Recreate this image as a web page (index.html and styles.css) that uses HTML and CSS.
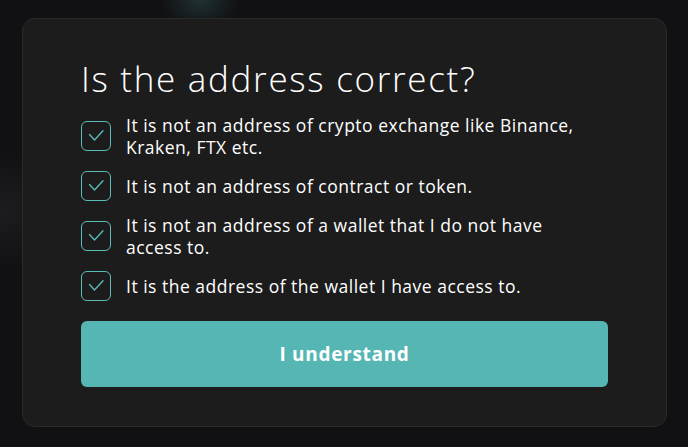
FILE: index.html
```html
<!DOCTYPE html>
<html lang="en">
<head>
<meta charset="utf-8">
<title>Is the address correct?</title>
<link rel="stylesheet" href="styles.css">
</head>
<body>
<div class="backdrop">
  <div class="modal">
    <h1 class="title">Is the address correct?</h1>
    <ul class="checks">
      <li class="check">
        <span class="box"><svg viewBox="0 0 18 18" width="18" height="18"><path d="M2.5 7.5 L7.5 13 L16 3.8" fill="none" stroke="#5bbdb9" stroke-width="1.3" stroke-linecap="round" stroke-linejoin="round"/></svg></span>
        <span class="label">It is not an address of crypto exchange like Binance, Kraken, FTX etc.</span>
      </li>
      <li class="check">
        <span class="box"><svg viewBox="0 0 18 18" width="18" height="18"><path d="M2.5 7.5 L7.5 13 L16 3.8" fill="none" stroke="#5bbdb9" stroke-width="1.3" stroke-linecap="round" stroke-linejoin="round"/></svg></span>
        <span class="label">It is not an address of contract or token.</span>
      </li>
      <li class="check">
        <span class="box"><svg viewBox="0 0 18 18" width="18" height="18"><path d="M2.5 7.5 L7.5 13 L16 3.8" fill="none" stroke="#5bbdb9" stroke-width="1.3" stroke-linecap="round" stroke-linejoin="round"/></svg></span>
        <span class="label">It is not an address of a wallet that I do not have access to.</span>
      </li>
      <li class="check">
        <span class="box"><svg viewBox="0 0 18 18" width="18" height="18"><path d="M2.5 7.5 L7.5 13 L16 3.8" fill="none" stroke="#5bbdb9" stroke-width="1.3" stroke-linecap="round" stroke-linejoin="round"/></svg></span>
        <span class="label">It is the address of the wallet I have access to.</span>
      </li>
    </ul>
    <button class="confirm" type="button">I understand</button>
  </div>
</div>
</body>
</html>
```

FILE: styles.css
```css
* { box-sizing: border-box; }
html, body { margin: 0; height: 100%; }
body {
  background: #111013;
  font-family: "Open Sans", "Noto Sans", sans-serif;
  color: #fff;
}
.backdrop {
  height: 100%;
  padding: 18px 21px 20px 22px;
  background:
    radial-gradient(ellipse 40px 30px at 200px 0px, rgba(60,110,110,0.35), transparent),
    radial-gradient(ellipse 120px 60px at 0px 210px, rgba(40,40,44,0.5), transparent),
    #111013;
}
.modal {
  width: 645px;
  height: 409px;
  background: #1c1c1c;
  border: 1px solid #2a2a2a;
  border-radius: 13px;
  padding: 37px 58px 40px 58px;
  display: flex;
  flex-direction: column;
}
.title {
  margin: 0;
  font-size: 35px;
  font-weight: 300;
  line-height: 46px;
  letter-spacing: 1.7px;
}
.checks {
  list-style: none;
  margin: 12px 0 0 0;
  padding: 0;
  display: flex;
  flex-direction: column;
  gap: 13px;
}
.check {
  display: flex;
  align-items: center;
  gap: 15px;
  min-height: 30px;
}
.box {
  flex: none;
  width: 30px;
  height: 30px;
  border: 1.5px solid #5bbdb9;
  border-radius: 6px;
  display: flex;
  align-items: center;
  justify-content: center;
}
.label {
  font-size: 17.5px;
  line-height: 22px;
  letter-spacing: 0.5px;
  max-width: 455px;
}
.confirm {
  margin-top: 20px;
  height: 66px;
  flex: none;
  border: none;
  border-radius: 6px;
  background: #56b6b4;
  color: #fff;
  font-family: "Open Sans", "Noto Sans", sans-serif;
  font-size: 19px;
  font-weight: 700;
  letter-spacing: 0.7px;
}
```
